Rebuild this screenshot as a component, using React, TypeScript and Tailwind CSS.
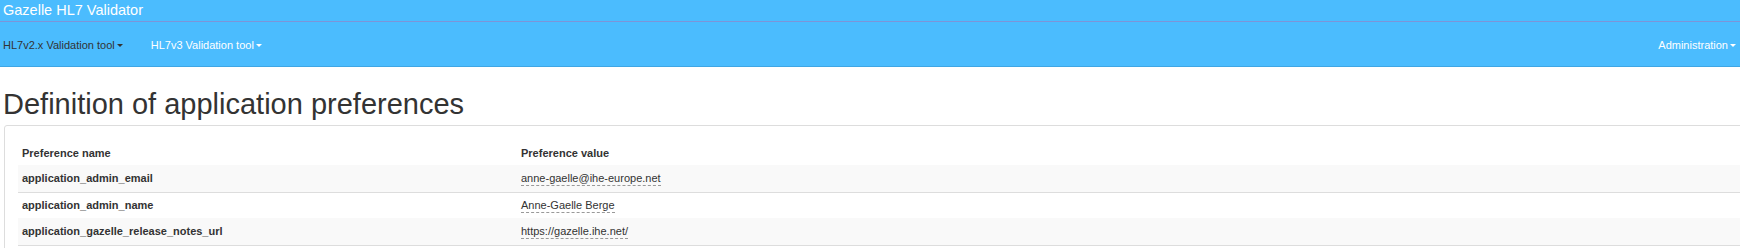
import React from "react";

const prefs = [
  { name: "application_admin_email", value: "anne-gaelle@ihe-europe.net", striped: true },
  { name: "application_admin_name", value: "Anne-Gaelle Berge", striped: false },
  { name: "application_gazelle_release_notes_url", value: "https://gazelle.ihe.net/", striped: true },
];

function Caret() {
  return (
    <span className="inline-block ml-[2px] w-0 h-0 border-t-[3px] border-x-[3px] border-x-transparent border-t-current align-middle" />
  );
}

export default function App() {
  return (
    <div className="w-full h-[248px] overflow-hidden bg-white font-['Liberation_Sans',Arial,sans-serif] text-[#333]">
      {/* navbar */}
      <div className="bg-[#4bbcfe]">
        <div className="h-[22px] flex items-center pl-[3px] border-b border-[#7d94d8]">
          <span className="text-[14.5px] text-white leading-none pb-[1px]">Gazelle HL7 Validator</span>
        </div>
        <div className="h-[45px] pt-[2px] flex items-center text-[11px] border-b border-[#3fa6e4]">
          <div className="pl-[3px] pr-[14px] text-[#333] flex items-center">
            HL7v2.x Validation tool
            <Caret />
          </div>
          <div className="pl-[14px] text-white flex items-center">
            HL7v3 Validation tool
            <Caret />
          </div>
          <div className="ml-auto pr-[4px] text-white flex items-center">
            Administration
            <Caret />
          </div>
        </div>
      </div>

      {/* title */}
      <h1 className="mt-[21px] pl-[3px] text-[29px] leading-[32px] font-normal text-[#333]">
        Definition of application preferences
      </h1>

      {/* panel */}
      <div className="mt-[5px] ml-[4px] w-[1800px] border border-[#ddd] rounded-[3px] pt-[15px] px-[13px] pb-[10px]">
        <table className="w-full text-[11px] border-collapse">
          <thead>
            <tr className="h-[24px]">
              <th className="text-left font-bold pl-[4px] w-[503px]">Preference name</th>
              <th className="text-left font-bold">Preference value</th>
            </tr>
          </thead>
          <tbody>
            {prefs.map((p) => (
              <tr
                key={p.name}
                className={
                  p.striped
                    ? "h-[27px] bg-[#f9f9f9] border-b border-[#ddd]"
                    : "h-[26px] bg-white"
                }
              >
                <td className="pl-[4px] font-bold">{p.name}</td>
                <td>
                  <span className="inline-block leading-[13px] border-b border-dashed border-[#999]">{p.value}</span>
                </td>
              </tr>
            ))}
          </tbody>
        </table>
      </div>
    </div>
  );
}
